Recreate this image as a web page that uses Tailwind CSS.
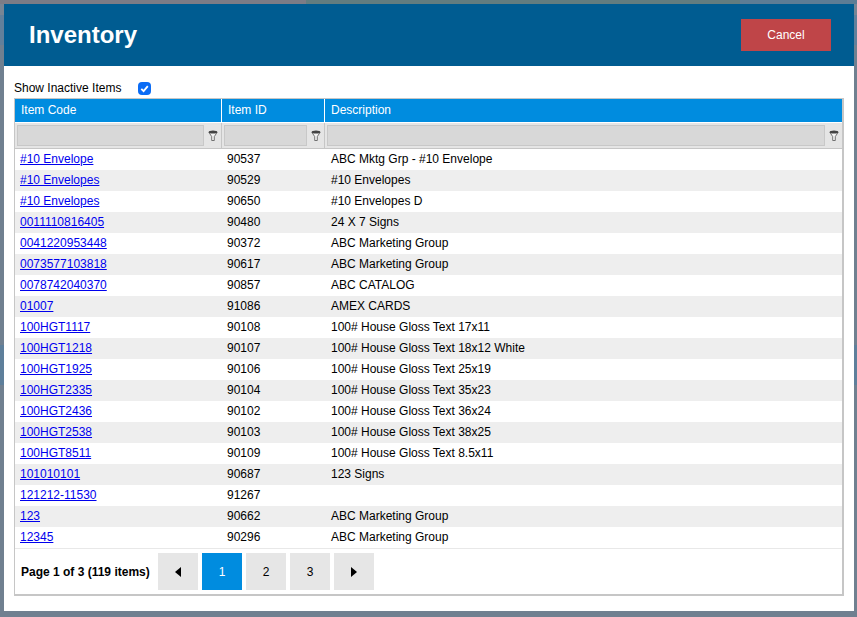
<!DOCTYPE html>
<html lang="en">
<head>
  <meta charset="UTF-8" />
  <title>Inventory</title>
  <script src="https://cdn.jsdelivr.net/npm/@tailwindcss/browser@4"></script>
</head>
<body class="bg-[linear-gradient(to_bottom,#778594_0,#778594_15px,#62809b_15px,#62809b_45px,#708090_45px,#708090_345px,#5e7f9b_345px,#5e7f9b_385px,#708090_385px)] h-[617px] w-[857px] overflow-hidden font-['Liberation_Sans',Arial,sans-serif] text-black">

  <!-- Page behind the modal, only this strip shows -->
  <div class="flex h-1">
    <div class="w-[306px] bg-[#7c7c86]"></div>
    <div class="w-[434px] bg-[#627d80]"></div>
    <div class="flex-1 bg-[#5d7d95]"></div>
  </div>

  <div class="ml-1 w-[850px] h-[607px] bg-white flex flex-col">

    <!-- Header -->
    <div class="h-[62px] bg-[#005c91] flex items-center justify-between pl-[25px] pr-[23px] shrink-0">
      <h1 class="text-2xl font-bold text-white leading-none">Inventory</h1>
      <button class="w-[90px] h-8 bg-[#bf4548] text-white text-xs">Cancel</button>
    </div>

    <div class="px-2.5 pt-[13px]">
      <!-- Inactive toggle -->
      <div class="flex items-center h-[18px] mb-px text-xs">
        <span class="w-[124px]">Show Inactive Items</span>
        <span class="w-[13px] h-[13px] rounded-sm bg-[#0b6cf5] flex items-center justify-center">
          <svg viewBox="0 0 12 12" class="w-[11px] h-[11px]"><path d="M2.5 6.3 5 8.8 9.6 3.4" fill="none" stroke="white" stroke-width="2"/></svg>
        </span>
      </div>

      <!-- Grid -->
      <div class="w-[830px] h-[498px] border border-[#c6c6c6] border-b-2 border-r-2 flex flex-col">
        <div class="grid grid-cols-[207px_103px_1fr] h-6 bg-[#008cdf] text-white text-xs leading-[22px] border-b border-white shrink-0">
          <div class="pl-[6px] border-r border-white">Item Code</div>
          <div class="pl-[6px] border-r border-white">Item ID</div>
          <div class="pl-[6px]">Description</div>
        </div>

        <!-- Filters -->
        <div class="grid grid-cols-[207px_103px_1fr] h-[26px] bg-[#e5e5e5] border-b border-[#c6c6c6] shrink-0">
          <div class="flex items-center pl-0.5 border-r border-[#c6c6c6]">
            <div class="flex-1 h-[21px] bg-[#d8d8d8] border border-[#c8c8c8]"></div>
            <svg viewBox="0 0 10 11" class="w-2.5 h-[11px] ml-1 mr-[3px]"><path d="M.8 2.2 3.7 6.6v3.9h2.6V6.6L9.2 2.2z" fill="#f4f4f4" stroke="#555" stroke-width=".8"/><ellipse cx="5" cy="2" rx="4.2" ry="1.5" fill="#444"/></svg>
          </div>
          <div class="flex items-center pl-0.5 border-r border-[#c6c6c6]">
            <div class="flex-1 h-[21px] bg-[#d8d8d8] border border-[#c8c8c8]"></div>
            <svg viewBox="0 0 10 11" class="w-2.5 h-[11px] ml-1 mr-[3px]"><path d="M.8 2.2 3.7 6.6v3.9h2.6V6.6L9.2 2.2z" fill="#f4f4f4" stroke="#555" stroke-width=".8"/><ellipse cx="5" cy="2" rx="4.2" ry="1.5" fill="#444"/></svg>
          </div>
          <div class="flex items-center pl-0.5">
            <div class="flex-1 h-[21px] bg-[#d8d8d8] border border-[#c8c8c8]"></div>
            <svg viewBox="0 0 10 11" class="w-2.5 h-[11px] ml-1 mr-[3px]"><path d="M.8 2.2 3.7 6.6v3.9h2.6V6.6L9.2 2.2z" fill="#f4f4f4" stroke="#555" stroke-width=".8"/><ellipse cx="5" cy="2" rx="4.2" ry="1.5" fill="#444"/></svg>
          </div>
        </div>

        <!-- Rows -->
        <div class="text-xs">
          <div class="grid grid-cols-[207px_103px_1fr] h-[21px] leading-[21px] bg-white"><a href="#" class="pl-[5px] text-[#0000ee] underline">#10 Envelope</a><div class="pl-[5px]">90537</div><div class="pl-[6px]">ABC Mktg Grp - #10 Envelope</div></div>
          <div class="grid grid-cols-[207px_103px_1fr] h-[21px] leading-[21px] bg-[#eeeeee]"><a href="#" class="pl-[5px] text-[#0000ee] underline">#10 Envelopes</a><div class="pl-[5px]">90529</div><div class="pl-[6px]">#10 Envelopes</div></div>
          <div class="grid grid-cols-[207px_103px_1fr] h-[21px] leading-[21px] bg-white"><a href="#" class="pl-[5px] text-[#0000ee] underline">#10 Envelopes</a><div class="pl-[5px]">90650</div><div class="pl-[6px]">#10 Envelopes D</div></div>
          <div class="grid grid-cols-[207px_103px_1fr] h-[21px] leading-[21px] bg-[#eeeeee]"><a href="#" class="pl-[5px] text-[#0000ee] underline">0011110816405</a><div class="pl-[5px]">90480</div><div class="pl-[6px]">24 X 7 Signs</div></div>
          <div class="grid grid-cols-[207px_103px_1fr] h-[21px] leading-[21px] bg-white"><a href="#" class="pl-[5px] text-[#0000ee] underline">0041220953448</a><div class="pl-[5px]">90372</div><div class="pl-[6px]">ABC Marketing Group</div></div>
          <div class="grid grid-cols-[207px_103px_1fr] h-[21px] leading-[21px] bg-[#eeeeee]"><a href="#" class="pl-[5px] text-[#0000ee] underline">0073577103818</a><div class="pl-[5px]">90617</div><div class="pl-[6px]">ABC Marketing Group</div></div>
          <div class="grid grid-cols-[207px_103px_1fr] h-[21px] leading-[21px] bg-white"><a href="#" class="pl-[5px] text-[#0000ee] underline">0078742040370</a><div class="pl-[5px]">90857</div><div class="pl-[6px]">ABC CATALOG</div></div>
          <div class="grid grid-cols-[207px_103px_1fr] h-[21px] leading-[21px] bg-[#eeeeee]"><a href="#" class="pl-[5px] text-[#0000ee] underline">01007</a><div class="pl-[5px]">91086</div><div class="pl-[6px]">AMEX CARDS</div></div>
          <div class="grid grid-cols-[207px_103px_1fr] h-[21px] leading-[21px] bg-white"><a href="#" class="pl-[5px] text-[#0000ee] underline">100HGT1117</a><div class="pl-[5px]">90108</div><div class="pl-[6px]">100# House Gloss Text 17x11</div></div>
          <div class="grid grid-cols-[207px_103px_1fr] h-[21px] leading-[21px] bg-[#eeeeee]"><a href="#" class="pl-[5px] text-[#0000ee] underline">100HGT1218</a><div class="pl-[5px]">90107</div><div class="pl-[6px]">100# House Gloss Text 18x12 White</div></div>
          <div class="grid grid-cols-[207px_103px_1fr] h-[21px] leading-[21px] bg-white"><a href="#" class="pl-[5px] text-[#0000ee] underline">100HGT1925</a><div class="pl-[5px]">90106</div><div class="pl-[6px]">100# House Gloss Text 25x19</div></div>
          <div class="grid grid-cols-[207px_103px_1fr] h-[21px] leading-[21px] bg-[#eeeeee]"><a href="#" class="pl-[5px] text-[#0000ee] underline">100HGT2335</a><div class="pl-[5px]">90104</div><div class="pl-[6px]">100# House Gloss Text 35x23</div></div>
          <div class="grid grid-cols-[207px_103px_1fr] h-[21px] leading-[21px] bg-white"><a href="#" class="pl-[5px] text-[#0000ee] underline">100HGT2436</a><div class="pl-[5px]">90102</div><div class="pl-[6px]">100# House Gloss Text 36x24</div></div>
          <div class="grid grid-cols-[207px_103px_1fr] h-[21px] leading-[21px] bg-[#eeeeee]"><a href="#" class="pl-[5px] text-[#0000ee] underline">100HGT2538</a><div class="pl-[5px]">90103</div><div class="pl-[6px]">100# House Gloss Text 38x25</div></div>
          <div class="grid grid-cols-[207px_103px_1fr] h-[21px] leading-[21px] bg-white"><a href="#" class="pl-[5px] text-[#0000ee] underline">100HGT8511</a><div class="pl-[5px]">90109</div><div class="pl-[6px]">100# House Gloss Text 8.5x11</div></div>
          <div class="grid grid-cols-[207px_103px_1fr] h-[21px] leading-[21px] bg-[#eeeeee]"><a href="#" class="pl-[5px] text-[#0000ee] underline">101010101</a><div class="pl-[5px]">90687</div><div class="pl-[6px]">123 Signs</div></div>
          <div class="grid grid-cols-[207px_103px_1fr] h-[21px] leading-[21px] bg-white"><a href="#" class="pl-[5px] text-[#0000ee] underline">121212-11530</a><div class="pl-[5px]">91267</div><div class="pl-[6px]"></div></div>
          <div class="grid grid-cols-[207px_103px_1fr] h-[21px] leading-[21px] bg-[#eeeeee]"><a href="#" class="pl-[5px] text-[#0000ee] underline">123</a><div class="pl-[5px]">90662</div><div class="pl-[6px]">ABC Marketing Group</div></div>
          <div class="grid grid-cols-[207px_103px_1fr] h-[21px] leading-[21px] bg-white"><a href="#" class="pl-[5px] text-[#0000ee] underline">12345</a><div class="pl-[5px]">90296</div><div class="pl-[6px]">ABC Marketing Group</div></div>
        </div>

        <!-- Pager -->
        <div class="flex items-center gap-1 h-[46px] border-t border-[#e8e8e8] pl-[6px] text-xs">
          <span class="font-bold w-[133px]">Page 1 of 3 (119 items)</span>
          <button class="w-10 h-[37px] bg-[#e6e6e6] flex items-center justify-center"><svg viewBox="0 0 8 10" class="w-2 h-2.5"><path d="M7 0v10L1 5z" fill="black"/></svg></button>
          <button class="w-10 h-[37px] bg-[#008cdf] text-white">1</button>
          <button class="w-10 h-[37px] bg-[#e6e6e6]">2</button>
          <button class="w-10 h-[37px] bg-[#e6e6e6]">3</button>
          <button class="w-10 h-[37px] bg-[#e6e6e6] flex items-center justify-center"><svg viewBox="0 0 8 10" class="w-2 h-2.5"><path d="M1 0v10L7 5z" fill="black"/></svg></button>
        </div>
      </div>
    </div>
  </div>
</body>
</html>
